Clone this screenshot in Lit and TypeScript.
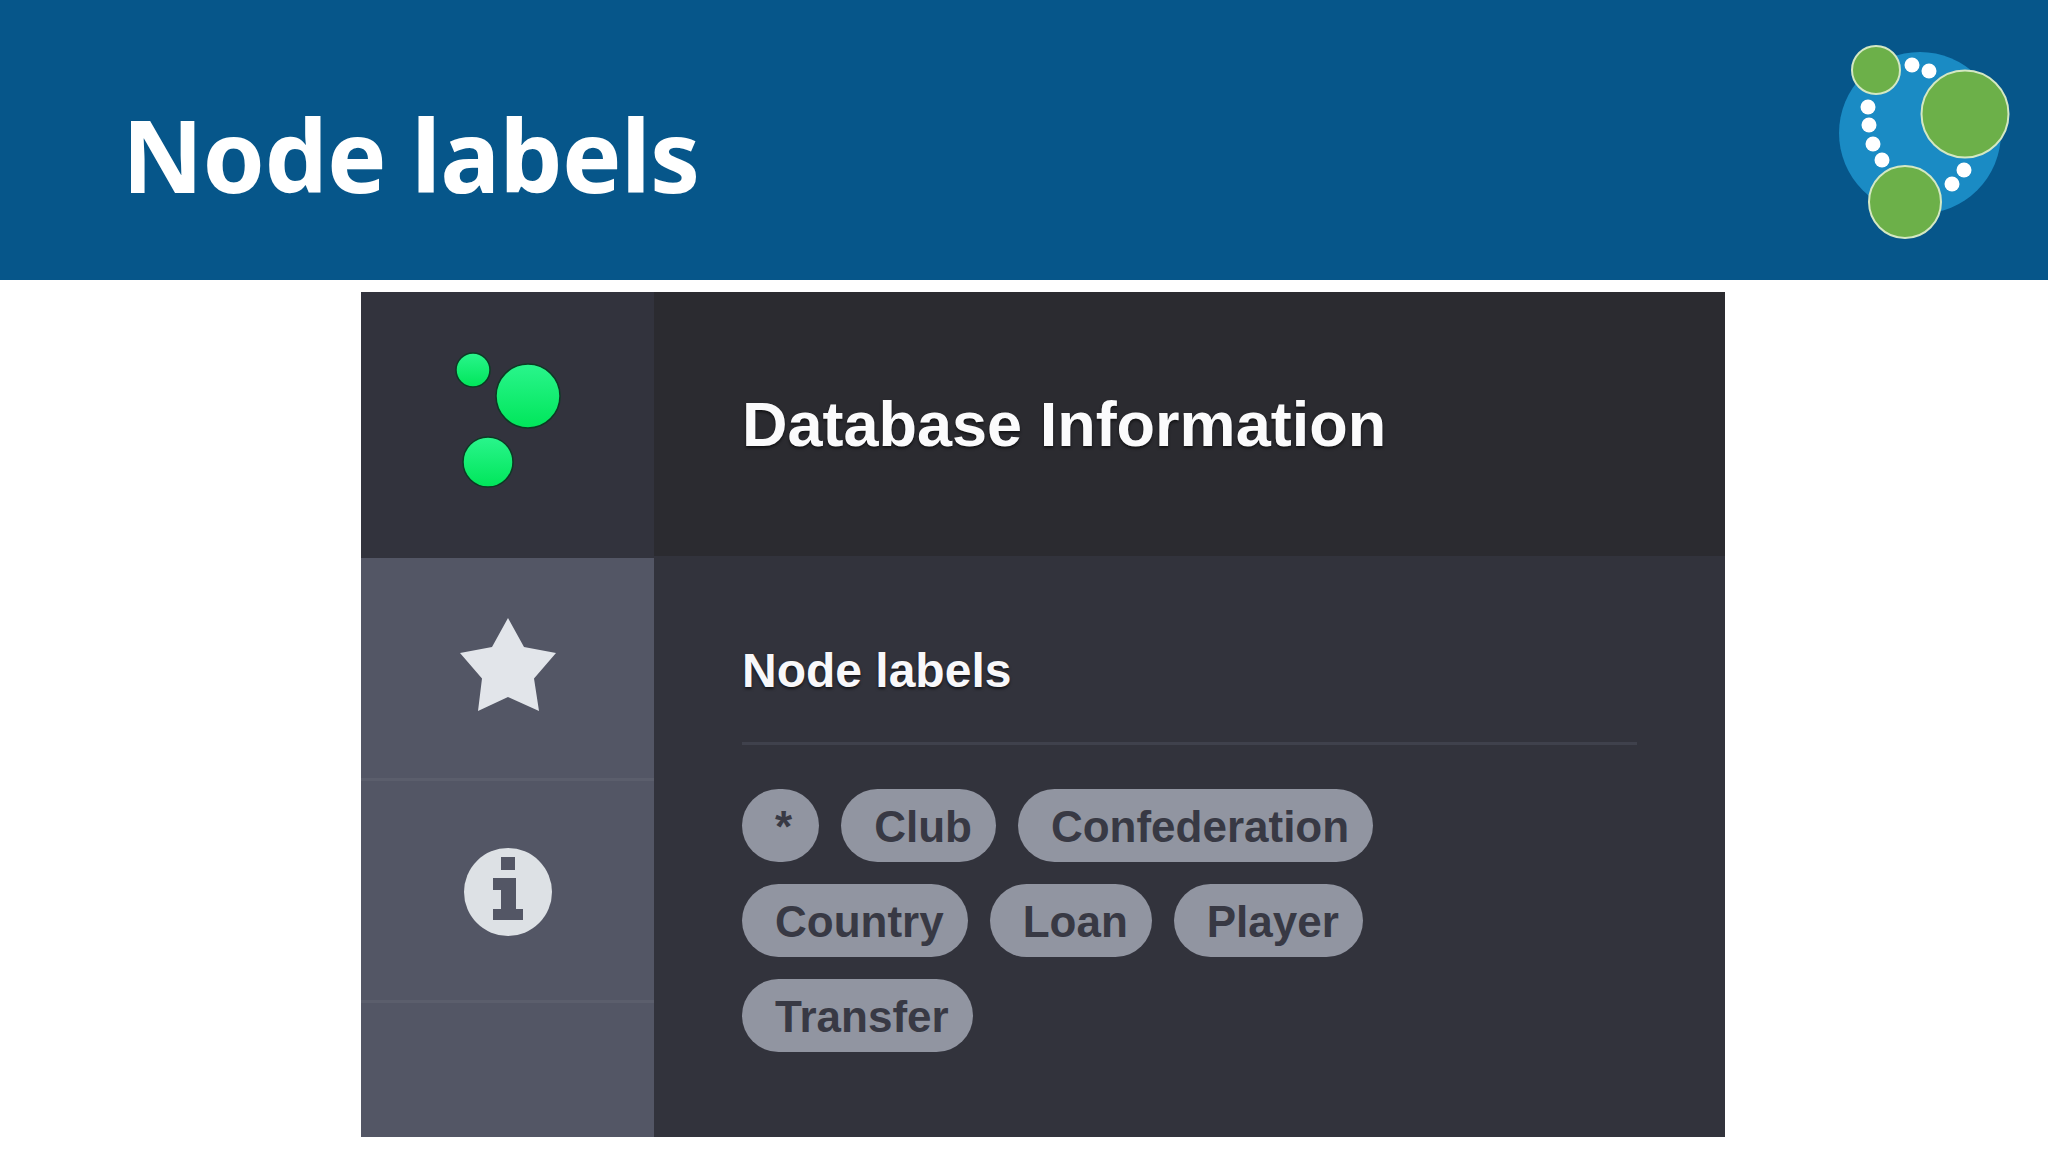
import { LitElement, html, css, svg } from "lit";
import { customElement } from "lit/decorators.js";

const labels = ["*", "Club", "Confederation", "Country", "Loan", "Player", "Transfer"];
const dots: [number, number][] = [[1912, 65], [1929, 71], [1868, 107], [1869, 125], [1873, 144], [1882, 160], [1964, 170], [1952, 184]];

@customElement("app-root")
export class AppRoot extends LitElement {
  static styles = css`
    :host { display: block; width: 2048px; height: 1152px; background: #fff; overflow: hidden; }
    .banner { height: 280px; background: #06568a; display: flex; justify-content: space-between; align-items: flex-start; box-sizing: border-box; padding: 0 36px 0 122px; }
    .banner h1 { margin: 91px 0 0; font: 700 100px/126px "Noto Sans", sans-serif; color: #fff; letter-spacing: -0.7px; }
    .neo { display: block; width: 174px; height: 200px; margin-top: 42px; }
    .panel { display: flex; width: 1364px; height: 845px; margin: 12px 0 0 361px; }
    .side { width: 293px; display: flex; flex-direction: column; background: #535665; flex: none; }
    .side svg { display: block; width: 293px; }
    .brand { height: 266px; background: #32333d; }
    .brand svg { height: 266px; }
    .item { height: 222px; }
    .item svg { height: 222px; }
    .rule { height: 3px; background: #5b5e6c; margin: -2px 0 -1px; }
    .main { flex: 1; display: flex; flex-direction: column; background: #32333c; font-family: "Liberation Sans", Arial, sans-serif; }
    .head { height: 264px; flex: none; background: #2b2b30; display: flex; align-items: center; padding-left: 88px; box-sizing: border-box; }
    .head h2 { margin: 0; font-size: 63px; font-weight: 700; color: #fbfbfc; text-shadow: 0 2px 3px rgba(0,0,0,.6); line-height: 72px; }
    .body { padding: 85px 88px 0 88px; }
    .body h3 { margin: 0; font-size: 48px; line-height: 60px; font-weight: 700; color: #f8f8fa; text-shadow: 0 2px 3px rgba(0,0,0,.6); }
    .divider { height: 3px; background: #3f414c; margin-top: 41px; }
    .chips { display: flex; flex-wrap: wrap; gap: 22px; margin-top: 44px; max-width: 700px; }
    .chip { height: 73px; line-height: 75px; padding: 0 24px 0 33px; border-radius: 37px; background: #9195a1; color: #383944; font-size: 44px; font-weight: 700; }
    .chip.star { padding: 0 27px 0 33px; }
  `;

  render() {
    return html`
      <header class="banner">
        <h1>Node labels</h1>
        <svg class="neo" viewBox="1838 42 174 200">
          <circle cx="1920" cy="133" r="81" fill="#1a8bc4" />
          ${dots.map(([x, y]) => svg`<circle cx=${x} cy=${y} r="7.5" fill="#fff" />`)}
          <circle cx="1876" cy="70" r="24" fill="#6cb049" stroke="#d4e8c3" stroke-width="2" />
          <circle cx="1965" cy="114" r="43.5" fill="#6cb049" stroke="#d4e8c3" stroke-width="2" />
          <circle cx="1905" cy="202" r="36" fill="#6cb049" stroke="#d4e8c3" stroke-width="2" />
        </svg>
      </header>
      <section class="panel">
        <nav class="side">
          <div class="brand">
            <svg viewBox="361 292 293 266">
              <defs>
                <linearGradient id="g" x1="0" y1="0" x2="0" y2="1">
                  <stop offset="0" stop-color="#2af58c" />
                  <stop offset="1" stop-color="#00e65a" />
                </linearGradient>
              </defs>
              <circle cx="473" cy="370" r="17" fill="url(#g)" stroke="#0c3a24" stroke-width="1.5" />
              <circle cx="528" cy="396" r="32" fill="url(#g)" stroke="#0c3a24" stroke-width="1.5" />
              <circle cx="488" cy="462" r="25" fill="url(#g)" stroke="#0c3a24" stroke-width="1.5" />
            </svg>
          </div>
          <div class="item">
            <svg viewBox="361 558 293 222">
              <path fill="#e2e5ea" d="M508 618 L524 647 L556 653 L534 678.5 L539 711 L508 697 L478 711 L482 678.5 L460 653 L492 647 Z" />
            </svg>
          </div>
          <div class="rule"></div>
          <div class="item">
            <svg viewBox="361 780 293 222">
              <circle cx="508" cy="892" r="44" fill="#dde1e5" />
              <path fill="#535665" d="M501 857 H515 V870 H501 Z M493 878 H516 V909 H523 V920 H493 V909 H501 V890 H493 Z" />
            </svg>
          </div>
          <div class="rule"></div>
        </nav>
        <div class="main">
          <div class="head"><h2>Database Information</h2></div>
          <div class="body">
            <h3>Node labels</h3>
            <div class="divider"></div>
            <div class="chips">
              ${labels.map((l) => html`<span class="chip ${l === "*" ? "star" : ""}">${l}</span>`)}
            </div>
          </div>
        </div>
      </section>
    `;
  }
}
